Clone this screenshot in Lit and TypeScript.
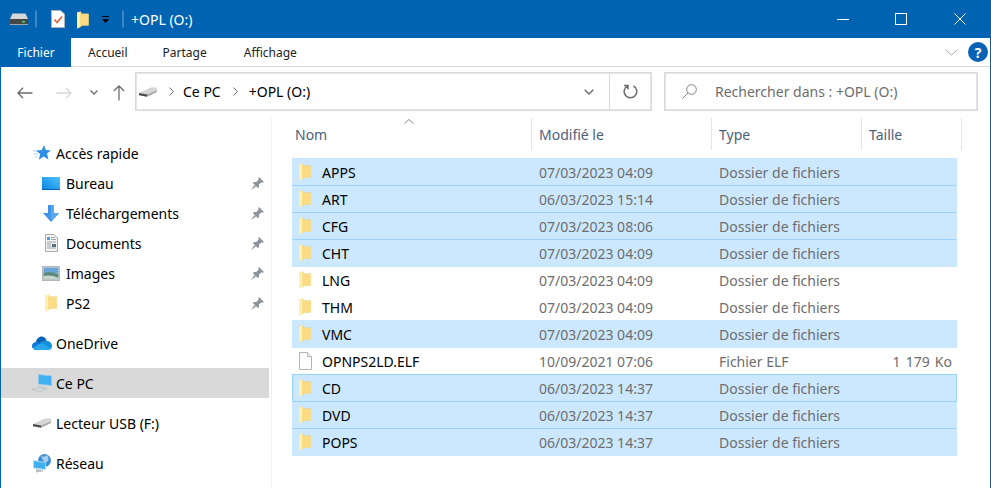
import { LitElement, html, css } from "lit";
import { customElement } from "lit/decorators.js";
import { classMap } from "lit/directives/class-map.js";

const folder = () => html`<svg class="ic-folder" width="12" height="18" viewBox="0 0 12 18">
  <path d="M0 1.5 L4 .5 L4.6 2.5 L11.6 2.5 L11.6 14.5 L4.5 14.5 L4.5 15.6 L0 17.4Z" fill="#edc767"/>
  <path d="M0 1.5 L3.6 .6 L3.6 15.9 L0 17.4Z" fill="#fff0ad"/>
  <path d="M3.6 3 L11.6 3 L11.6 14.5 L3.6 14.5Z" fill="#fbdc84"/>
</svg>`;

const fileIcon = () => html`<svg width="13" height="18" viewBox="0 0 13 18">
  <path d="M.5 .5 H8.5 L12.5 4.5 V17.5 H.5Z" fill="#fff" stroke="#b4b4b4"/>
  <path d="M8.5 .5 V4.5 H12.5" fill="#f0f0f0" stroke="#b4b4b4"/>
</svg>`;

const titleDrive = () => html`<svg width="18" height="12" viewBox="0 0 18 12">
  <path d="M2.5 .5 H15.5 L18 6 V11 H0 V6Z" fill="#d7d7d7"/>
  <rect y="6" width="18" height="5.5" fill="#474747"/>
  <rect x="12" y="8" width="3" height="1.5" fill="#4fd15a"/>
  <rect y="11" width="18" height="1" fill="#9fa6ad"/>
</svg>`;

const slantDrive = () => html`<svg width="18" height="10" viewBox="0 0 18 10">
  <path d="M0 6 L12 .5 H18 V4.5 L8 9.5Z" fill="#d6d6d6"/>
  <path d="M0 6 L8 7.5 V9.8 L0 8.2Z" fill="#4a4a4a"/>
  <path d="M8 7.5 L18 3.5 V5 L8 9.8Z" fill="#a8a8a8"/>
</svg>`;

const pin = () => html`<svg class="pin" width="13" height="13" viewBox="0 0 13 13">
  <path d="M8 0 L13 5 L11.8 5.8 L10.8 5.2 L8 7.6 L8 10.2 L6.8 11 L2 6.2 L2.8 5 L5.4 5 L7.8 2.2 L7.2 1.2Z" fill="#8b949c"/>
  <path d="M0 13 L3.6 8 L5 9.4Z" fill="#8b949c"/>
</svg>`;

const sideIcons: Record<string, () => unknown> = {
  star: () => html`<svg width="18" height="16" viewBox="0 0 18 16">
    <path d="M11 0 L12.8 5 L18 5.4 L14 8.6 L15.4 14.5 L10.6 11.4 L5.8 14.8 L7.2 9 L3 5.6 L8.8 5Z" fill="#2f8fe6"/>
    <path d="M0 6 H4 M1 9 H5 M2 12 H5" stroke="#a9d3f5" stroke-width="1"/>
  </svg>`,
  desktop: () => html`<svg width="18" height="13" viewBox="0 0 18 13">
    <defs><linearGradient id="dk" x1="0" y1="1" x2="1" y2="0"><stop offset="0" stop-color="#0a84e0"/><stop offset="1" stop-color="#4cc2ff"/></linearGradient></defs>
    <rect width="18" height="13" fill="url(#dk)"/>
    <path d="M0 12 H18 V13 H0Z" fill="#0465b5"/>
  </svg>`,
  download: () => html`<svg width="16" height="17" viewBox="0 0 16 17">
    <path d="M5 0 H11 V8 H16 L8 17 L0 8 H5Z" fill="#3f93e6"/>
    <path d="M8 0 H11 V8 H16 L8 17Z" fill="#5aa8ee"/>
  </svg>`,
  documents: () => html`<svg width="13" height="18" viewBox="0 0 13 18">
    <path d="M.5 .5 H9 L12.5 4 V17.5 H.5Z" fill="#f4f4f4" stroke="#a9a9a9"/>
    <path d="M2 3 H5 V6 H2Z" fill="#4b9be0"/>
    <path d="M6 3.5 H10 M6 5.5 H11 M2 8 H11 M2 10 H6 M2 12 H6 M2 14 H11" stroke="#9aa3ab"/>
    <rect x="7" y="10" width="4" height="3" fill="#55707f"/>
  </svg>`,
  images: () => html`<svg width="18" height="15" viewBox="0 0 18 15">
    <rect x=".5" y=".5" width="17" height="14" fill="#e6e6e6" stroke="#b6b6b6"/>
    <rect x="1.5" y="1.5" width="15" height="6" fill="#6ba4d6"/>
    <path d="M1.5 7 Q7 4.5 16.5 8 V13.5 H1.5Z" fill="#5c8a80"/>
    <path d="M1.5 10 Q9 8.5 16.5 12 V13.5 H1.5Z" fill="#c9d6cf"/>
  </svg>`,
  folder,
  onedrive: () => html`<svg width="20" height="14" viewBox="0 0 20 14">
    <path d="M4 6 C4.5 2 9 -1 12.5 1.5 C14 2.5 14.5 4 14.5 5 L8 9Z" fill="#0364b8"/>
    <path d="M4.5 6 C2 6 0 7.5 0 10 C0 11 .4 12 1 12.5 L8 9.5 L9 7.5Z" fill="#0f78d4"/>
    <path d="M8 7 C10 5 12.5 4.2 14.6 5 C17.5 5 20 7 20 10 C20 11.2 19.6 12.2 19 13 L11 10Z" fill="#1490df"/>
    <path d="M1 12.5 C1.6 13.5 2.6 14 4 14 H16 C17.4 14 18.4 13.6 19 13 C16 10 12 7.5 9 7.5 C6 8 3 10.5 1 12.5Z" fill="#28a8ea"/>
  </svg>`,
  pc: () => html`<svg width="20" height="18" viewBox="0 0 20 18">
    <path d="M6.5 .5 L19.5 2 V11.5 L6.5 10Z" fill="#3fb1f2" stroke="#8fc9ee" stroke-width=".8"/>
    <path d="M4.5 12 L15 12.5 L13 13 V14 L7 13.5Z" fill="#c6ccd2"/>
    <path d="M0 15.5 L7 13.8 L15 14.6 L8 17.6Z" fill="#d5d9dd" stroke="#aeb4ba" stroke-width=".5"/>
  </svg>`,
  usb: slantDrive,
  network: () => html`<svg width="18" height="19" viewBox="0 0 18 19">
    <circle cx="11.5" cy="6.5" r="6.5" fill="#3c8fd6"/>
    <path d="M8 2 Q11 4 14 1 Q17 5 14 8 Q11 9 10 6Z" fill="#a8cdea"/>
    <path d="M.5 6.5 L12.5 8.5 V15.5 L.5 14Z" fill="#3fb1f2" stroke="#bcdcf2" stroke-width=".8"/>
    <path d="M3 15 L10 16 V17.5 L3 18.5Z" fill="#b9c0c6"/>
  </svg>`,
};

type SideItem = { label: string; icon: string; child?: boolean; pinned?: boolean; active?: boolean; first?: boolean };

const sideItems: SideItem[] = [
  { label: "Accès rapide", icon: "star" },
  { label: "Bureau", icon: "desktop", child: true, pinned: true },
  { label: "Téléchargements", icon: "download", child: true, pinned: true },
  { label: "Documents", icon: "documents", child: true, pinned: true },
  { label: "Images", icon: "images", child: true, pinned: true },
  { label: "PS2", icon: "folder", child: true, pinned: true },
  { label: "OneDrive", icon: "onedrive", first: true },
  { label: "Ce PC", icon: "pc", first: true, active: true },
  { label: "Lecteur USB (F:)", icon: "usb", first: true },
  { label: "Réseau", icon: "network", first: true },
];

type FileRow = { name: string; date: string; type?: string; size?: string; selected: boolean; focus?: boolean; file?: boolean };

const DIR = "Dossier de fichiers";
const rows: FileRow[] = [
  { name: "APPS", date: "07/03/2023 04:09", selected: true },
  { name: "ART", date: "06/03/2023 15:14", selected: true },
  { name: "CFG", date: "07/03/2023 08:06", selected: true },
  { name: "CHT", date: "07/03/2023 04:09", selected: true },
  { name: "LNG", date: "07/03/2023 04:09", selected: false },
  { name: "THM", date: "07/03/2023 04:09", selected: false },
  { name: "VMC", date: "07/03/2023 04:09", selected: true },
  { name: "OPNPS2LD.ELF", date: "10/09/2021 07:06", type: "Fichier ELF", size: "1 179 Ko", selected: false, file: true },
  { name: "CD", date: "06/03/2023 14:37", selected: true, focus: true },
  { name: "DVD", date: "06/03/2023 14:37", selected: true },
  { name: "POPS", date: "06/03/2023 14:37", selected: true },
];

@customElement("app-root")
export class AppRoot extends LitElement {
  static styles = css`
    :host {
      display: block;
      width: 991px;
      height: 488px;
      box-sizing: border-box;
      border-left: 1px solid #0063b1;
      border-right: 1px solid #0063b1;
      background: #fff;
      overflow: hidden;
      font-family: "Noto Sans", "Open Sans", sans-serif;
      font-size: 14px;
      color: #000;
    }
    svg { display: block; flex: none; }

    .titlebar {
      height: 38px;
      margin: 0 -1px;
      background: #0063b1;
      color: #fff;
      display: flex;
      align-items: center;
    }
    .qat { display: flex; align-items: center; padding-left: 10px; }
    .qat-sep { height: 18px; width: 2px; margin: 0 14px 0 7px; border: 1px solid #3c86c4; border-radius: 1px; box-sizing: border-box; }
    .qat-folder { margin-left: 12px; margin-top: 2px; }
    .qat-caret { margin: 1px 0 0 13px; }
    .qat-sep.second { margin: 0 7px 0 13px; }
    .title { font-size: 14px; flex: 1; }
    .win { display: flex; align-items: center; padding-right: 2px; }
    .win span { width: 58.5px; display: flex; justify-content: center; }

    .ribbon {
      height: 28px;
      display: flex;
      align-items: center;
      border-bottom: 1px solid #d9d9d9;
      font-size: 12px;
      color: #222;
    }
    .tab-file {
      width: 70px;
      height: 29px;
      margin-bottom: -1px;
      background: #0063b1;
      color: #fff;
      display: flex;
      align-items: center;
      justify-content: center;
    }
    .tab { margin-left: 17px; }
    .tab + .tab { margin-left: 35px; }
    .tab + .tab + .tab { margin-left: 37px; }
    .ribbon-end { margin-left: auto; display: flex; align-items: center; gap: 10px; padding-right: 2px; }
    .help {
      width: 20px;
      height: 20px;
      border-radius: 50%;
      background: #0a62b4;
      color: #fff;
      font-weight: 700;
      font-size: 14px;
      display: flex;
      align-items: center;
      justify-content: center;
    }

    .nav { height: 51px; display: flex; align-items: center; padding-bottom: 2px; box-sizing: border-box; }
    .nav-btns { width: 134px; display: flex; align-items: center; padding: 2px 0 0 16px; box-sizing: border-box; }
    .nav-fwd { margin-left: 23px; }
    .nav-down { margin-left: 18px; }
    .nav-up { margin-left: 15px; }
    .address {
      width: 517px;
      height: 39px;
      box-sizing: border-box;
      border: 1px solid #d9d9d9;
      outline: 1px solid #e4e4e4;
      outline-offset: -2px;
      display: flex;
      align-items: center;
      padding-left: 3px;
    }
    .crumb-sep { margin: 0 11px 0 12px; }
    .crumb-sep.first { margin: 0 9px 0 12px; }
    .crumbs-end { margin-left: auto; display: flex; align-items: center; height: 100%; }
    .addr-down { margin-right: 15px; }
    .addr-refresh { width: 41px; height: 100%; border-left: 1px solid #d9d9d9; display: flex; align-items: center; justify-content: center; }
    .search {
      width: 314px;
      height: 39px;
      margin-left: 12px;
      box-sizing: border-box;
      border: 1px solid #d9d9d9;
      outline: 1px solid #e4e4e4;
      outline-offset: -2px;
      display: flex;
      align-items: center;
      gap: 18px;
      padding-left: 17px;
      color: #6d6d6d;
    }

    .content { display: flex; height: 370px; }
    .side { width: 270px; border-right: 1px solid #f0f0f0; padding-top: 20px; flex: none; }
    .item { height: 30px; display: flex; align-items: center; margin-right: 2px; padding-left: 26px; }
    .item.first { margin-top: 10px; }
    .item.child { padding-left: 41px; }
    .item.active { background: #d9d9d9; }
    .item-icon { width: 29px; height: 30px; display: flex; align-items: center; justify-content: center; flex: none; }
    .item.child .item-icon { width: 18px; margin-right: 6px; }
    .pin { margin-left: auto; margin-right: 5px; }

    .main { flex: 1; padding-left: 20px; }
    .head {
      position: relative;
      display: grid;
      grid-template-columns: 240px 180px 150px 100px;
      height: 32px;
      margin-bottom: 8px;
      color: #4c607a;
    }
    .head > div { border-right: 1px solid #e5e5e5; display: flex; align-items: center; padding-left: 7px; }
    .head > div:first-child { padding-left: 3px; }
    .sort { position: absolute; left: 112px; top: 1px; }

    .row {
      display: grid;
      grid-template-columns: 239px 180px 150px 94px;
      width: 665px;
      height: 28px;
      margin-bottom: -1px;
      box-sizing: border-box;
      border: 1px solid transparent;
      align-items: center;
      color: #6d6d6d;
    }
    .row.sel { background: #cce8ff; border-color: #cce8ff; }
    .row.joined { border-top-color: #99d1ff; }
    .row.focus { border-color: #99d1ff; }
    .name { display: flex; align-items: center; color: #000; padding-left: 6px; }
    .name .ico { width: 12px; margin-right: 11px; display: flex; justify-content: center; flex: none; }
    .date, .type { padding-left: 7px; }
    .size { text-align: right; padding-right: 4px; word-spacing: 1.5px; }
  `;

  private renderSideItem(item: SideItem) {
    const classes = classMap({ item: true, child: !!item.child, active: !!item.active, first: !!item.first });
    return html`<div class=${classes}>
      <span class="item-icon">${sideIcons[item.icon]()}</span>
      <span>${item.label}</span>
      ${item.pinned ? pin() : ""}
    </div>`;
  }

  private renderRow(row: FileRow, i: number) {
    const classes = classMap({
      row: true,
      sel: row.selected,
      joined: row.selected && i > 0 && rows[i - 1].selected,
      focus: !!row.focus,
    });
    return html`<div class=${classes}>
      <div class="name"><span class="ico">${row.file ? fileIcon() : folder()}</span>${row.name}</div>
      <div class="date">${row.date}</div>
      <div class="type">${row.type ?? DIR}</div>
      <div class="size">${row.size ?? ""}</div>
    </div>`;
  }

  render() {
    return html`
      <div class="titlebar">
        <div class="qat">
          ${titleDrive()}
          <span class="qat-sep"></span>
          <svg width="14" height="18" viewBox="0 0 14 18">
            <path d="M.5 .5 H9.5 L13.5 4 V17.5 H.5Z" fill="#fff" stroke="#a9b6c2"/>
            <path d="M3.5 9.5 L6 12.5 L11 6.5" fill="none" stroke="#e8623a" stroke-width="1.7"/>
          </svg>
          <span class="qat-folder">${folder()}</span>
          <svg class="qat-caret" width="7" height="7" viewBox="0 0 7 7">
            <path d="M0 0 H7 V1 H0Z M0 3 H7 L3.5 7Z" fill="#000"/>
          </svg>
          <span class="qat-sep second"></span>
        </div>
        <div class="title">+OPL (O:)</div>
        <div class="win">
          <span><svg width="12" height="12" viewBox="0 0 12 12"><path d="M0 6.5 H12" stroke="#fff"/></svg></span>
          <span><svg width="12" height="12" viewBox="0 0 12 12"><rect x=".5" y=".5" width="11" height="11" fill="none" stroke="#fff"/></svg></span>
          <span><svg width="12" height="12" viewBox="0 0 12 12"><path d="M.5 .5 L11.5 11.5 M11.5 .5 L.5 11.5" stroke="#fff"/></svg></span>
        </div>
      </div>

      <div class="ribbon">
        <div class="tab-file">Fichier</div>
        <div class="tab">Accueil</div>
        <div class="tab">Partage</div>
        <div class="tab">Affichage</div>
        <div class="ribbon-end">
          <svg width="13" height="7" viewBox="0 0 13 7"><path d="M.5 .5 L6.5 6 L12.5 .5" fill="none" stroke="#a8a8a8"/></svg>
          <div class="help">?</div>
        </div>
      </div>

      <div class="nav">
        <div class="nav-btns">
          <svg width="16" height="12" viewBox="0 0 16 12"><path d="M15.5 6 H1 M6 .8 L1 6 L6 11.2" fill="none" stroke="#6d6d6d" stroke-width="1.3"/></svg>
          <svg class="nav-fwd" width="16" height="12" viewBox="0 0 16 12"><path d="M.5 6 H15 M10 .8 L15 6 L10 11.2" fill="none" stroke="#d6d6d6" stroke-width="1.3"/></svg>
          <svg class="nav-down" width="8" height="5" viewBox="0 0 8 5"><path d="M.5 .5 L4 4 L7.5 .5" fill="none" stroke="#6d6d6d" stroke-width="1.3"/></svg>
          <svg class="nav-up" width="12" height="16" viewBox="0 0 12 16"><path d="M6 15.5 V1 M.8 6 L6 1 L11.2 6" fill="none" stroke="#6d6d6d" stroke-width="1.3"/></svg>
        </div>
        <div class="address">
          ${slantDrive()}
          <svg class="crumb-sep first" width="5" height="9" viewBox="0 0 5 9"><path d="M.5 .5 L4.5 4.5 L.5 8.5" fill="none" stroke="#6d6d6d"/></svg>
          <span>Ce PC</span>
          <svg class="crumb-sep" width="5" height="9" viewBox="0 0 5 9"><path d="M.5 .5 L4.5 4.5 L.5 8.5" fill="none" stroke="#6d6d6d"/></svg>
          <span>+OPL (O:)</span>
          <div class="crumbs-end">
            <svg class="addr-down" width="10" height="6" viewBox="0 0 10 6"><path d="M.7 .7 L5 5 L9.3 .7" fill="none" stroke="#6d6d6d" stroke-width="1.4"/></svg>
            <div class="addr-refresh">
              <svg width="15" height="15" viewBox="0 0 15 15"><path d="M4.4 2 A6.3 6.3 0 1 0 10.5 2 M1 1.5 H5 V5.5" fill="none" stroke="#6d6d6d" stroke-width="1.5"/></svg>
            </div>
          </div>
        </div>
        <div class="search">
          <svg width="15" height="15" viewBox="0 0 15 15"><circle cx="9.5" cy="5.5" r="4.8" fill="none" stroke="#808080"/><path d="M6 9 L.5 14.5" stroke="#808080"/></svg>
          <span>Rechercher dans : +OPL (O:)</span>
        </div>
      </div>

      <div class="content">
        <div class="side">${sideItems.map((item) => this.renderSideItem(item))}</div>
        <div class="main">
          <div class="head">
            <div>Nom</div>
            <div>Modifié le</div>
            <div>Type</div>
            <div>Taille</div>
            <svg class="sort" width="10" height="5" viewBox="0 0 10 5"><path d="M.5 4.5 L5 .5 L9.5 4.5" fill="none" stroke="#8a8a8a"/></svg>
          </div>
          ${rows.map((row, i) => this.renderRow(row, i))}
        </div>
      </div>
    `;
  }
}
